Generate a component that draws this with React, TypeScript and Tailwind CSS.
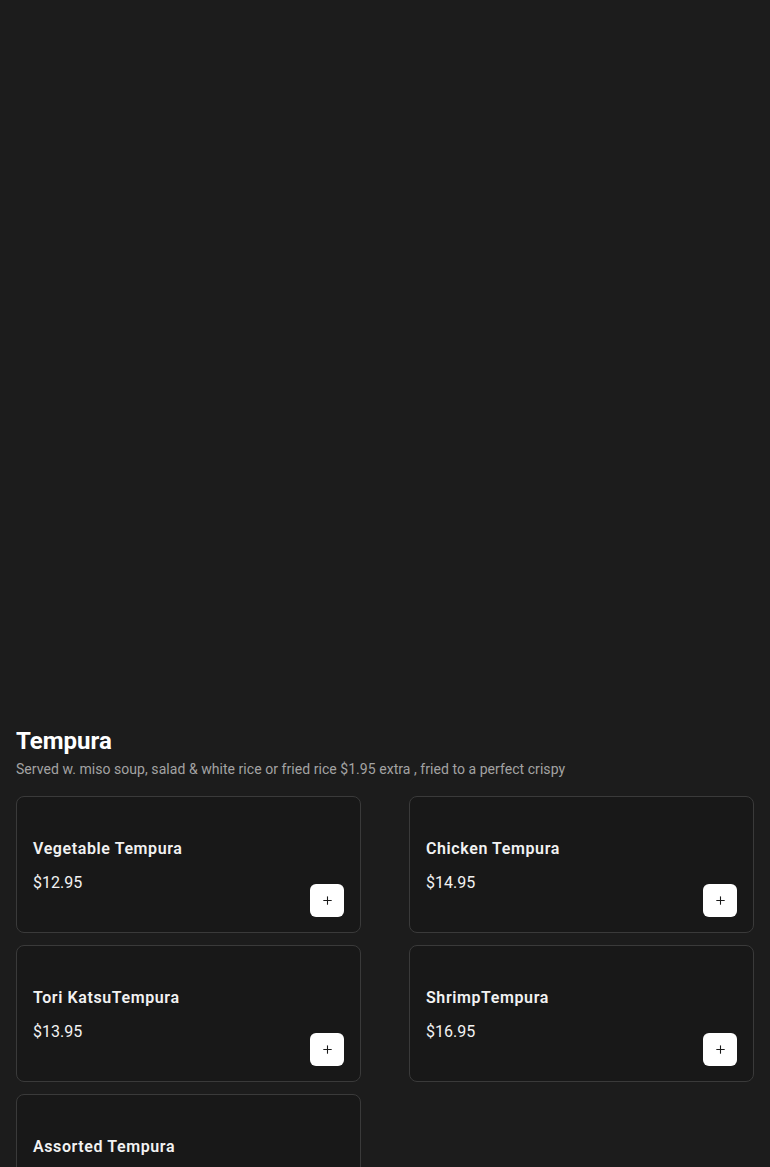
import React from "react";
import { Plus } from "lucide-react";

const items = [
  { name: "Vegetable Tempura", price: "$12.95" },
  { name: "Chicken Tempura", price: "$14.95" },
  { name: "Tori KatsuTempura", price: "$13.95" },
  { name: "ShrimpTempura", price: "$16.95" },
  { name: "Assorted Tempura", price: "$15.95" },
];

export default function App() {
  return (
    <div className="min-h-screen bg-[#1c1c1c] text-white" style={{ fontFamily: "Roboto, 'Noto Sans', sans-serif" }}>
      <div className="h-[725px]" />
      <div className="px-4 pb-8">
        <h2 className="text-2xl font-bold leading-8">Tempura</h2>
        <p className="mt-0.5 text-sm leading-5 tracking-[0.05px] text-[#a3a3a3]">
          Served w. miso soup, salad &amp; white rice or fried rice $1.95 extra , fried to a perfect crispy
        </p>
        <div className="mt-[17px] grid grid-cols-2 gap-x-12 gap-y-3">
          {items.map((it) => (
            <div
              key={it.name}
              className="flex h-[137px] flex-col rounded-lg border border-[#3a3a3a] bg-[#181818] px-4 pt-[40px]"
            >
              <div className="text-base font-semibold leading-6 tracking-[0.6px] text-[#f2f2f2]">{it.name}</div>
              <div className="mt-[10px] flex items-start justify-between">
                <div className="text-base leading-6 text-[#f2f2f2]">{it.price}</div>
                <button className="mt-[13px] flex h-[33px] w-[34px] items-center justify-center rounded-md bg-white text-[#1a1a1a]">
                  <Plus size={13} strokeWidth={2} />
                </button>
              </div>
            </div>
          ))}
        </div>
      </div>
    </div>
  );
}
